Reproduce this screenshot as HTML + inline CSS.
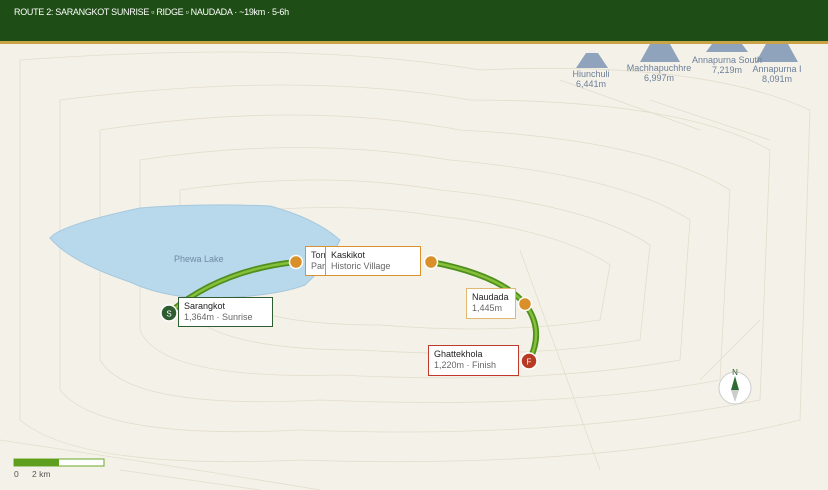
<!DOCTYPE html>
<html><head><style>
body{margin:0;width:828px;height:490px;overflow:hidden;background:#f4f1e8;font-family:"Liberation Sans",sans-serif;position:relative}
.hdr{position:absolute;left:0;top:0;width:828px;height:41px;background:#1e4d15}
.hdr span{position:absolute;left:14px;top:7px;color:#fff;font-size:9px;letter-spacing:-0.3px}
.gold{position:absolute;left:0;top:41px;width:828px;height:3px;background:#c9a447}
.box{position:absolute;background:#fff;font-size:9px;color:#333;padding:3px 5px;line-height:11px;box-sizing:border-box;white-space:nowrap;overflow:hidden}
.box b{font-weight:normal;color:#222}
.box i{font-style:normal;color:#666}
.m{position:absolute;font-size:9px;color:#6b7f99;text-align:center;line-height:10px;white-space:nowrap}
</style></head><body>
<svg width="828" height="490" style="position:absolute;left:0;top:0">
<g fill="none" stroke="#e3ddcc" stroke-width="0.8">
<path d="M20 60 Q300 40 480 70 Q700 60 810 110 L800 420 Q600 470 300 460 Q80 470 20 420Z"/>
<path d="M60 100 Q300 70 470 100 Q680 100 770 150 L760 400 Q560 440 300 430 Q100 440 60 390Z"/>
<path d="M100 130 Q300 100 460 130 Q650 140 730 190 L720 380 Q560 410 320 400 Q130 410 100 360Z"/>
<path d="M140 160 Q300 135 450 160 Q620 175 690 220 L680 360 Q540 385 340 375 Q160 380 140 330Z"/>
<path d="M180 190 Q320 170 440 190 Q590 205 650 245 L640 340 Q520 360 360 350 Q200 350 180 300Z"/>
<path d="M220 215 Q330 200 430 215 Q560 230 610 265 L600 320 Q500 335 380 325 Q240 325 220 285Z"/>
<path d="M560 80 L700 130 M650 100 L770 140 M700 380 L760 320 M520 250 L600 470"/>
<path d="M0 440 Q200 470 320 490 M120 470 L260 490"/>
</g>
<path d="M50 238 Q60 225 140 208 Q200 203 270 206 Q315 218 340 240 Q330 262 305 285 Q270 298 200 298 Q160 296 130 282 Q70 262 50 238Z" fill="#b8d8ec" stroke="#a7c8dd" stroke-width="1"/>
<path d="M169 313 Q220 270 296 262" fill="none" stroke="#4e8f1e" stroke-width="6"/>
<path d="M169 313 Q220 270 296 262" fill="none" stroke="#86bf3a" stroke-width="2.5"/>
<path d="M431 262 Q500 275 525 304 Q545 330 529 361" fill="none" stroke="#4e8f1e" stroke-width="6"/>
<path d="M431 262 Q500 275 525 304 Q545 330 529 361" fill="none" stroke="#86bf3a" stroke-width="2.5"/>
<circle cx="296" cy="262" r="6.5" fill="#d98f2a" stroke="#fff" stroke-width="1.5"/>
<circle cx="431" cy="262" r="6.5" fill="#d98f2a" stroke="#fff" stroke-width="1.5"/>
<circle cx="525" cy="304" r="6.5" fill="#d98f2a" stroke="#fff" stroke-width="1.5"/>
<circle cx="169" cy="313" r="8" fill="#2e5e30" stroke="#fff" stroke-width="1.5"/>
<text x="169" y="316.5" font-size="8" fill="#fff" text-anchor="middle" font-family="Liberation Sans">S</text>
<circle cx="529" cy="361" r="8" fill="#b83a24" stroke="#fff" stroke-width="1.5"/>
<text x="529" y="364.5" font-size="8" fill="#fff" text-anchor="middle" font-family="Liberation Sans">F</text>
<g fill="#8fa3bc"><polygon points="586,53 598,53 608,68 576,68"/><polygon points="650,44 670,44 680,62 640,62"/><polygon points="712,44 742,44 748,52 706,52"/><polygon points="766,44 788,44 798,62 756,62"/></g>
<polygon points="588,53 596,53 592,49" fill="#eee"/>
<rect x="14" y="459" width="90" height="7" fill="#fff" stroke="#6aa82a"/>
<rect x="14" y="459" width="45" height="7" fill="#5f9f1e"/>
<circle cx="735" cy="388" r="16" fill="#fff" stroke="#ccc"/>
<polygon points="735,376 739,390 731,390" fill="#2e6b33"/>
<polygon points="735,402 739,390 731,390" fill="#ccc"/>
<text x="735" y="375" font-size="8" fill="#2e5e30" text-anchor="middle" font-family="Liberation Sans">N</text>
<text x="14" y="477" font-size="8.5" fill="#555" font-family="Liberation Sans">0</text>
<text x="32" y="477" font-size="8.5" fill="#555" font-family="Liberation Sans">2 km</text>
<text x="174" y="262" font-size="9" fill="#6e8aa3" font-family="Liberation Sans">Phewa Lake</text>
</svg>
<div class="hdr"><span>ROUTE 2: SARANGKOT SUNRISE ▫ RIDGE ▫ NAUDADA · ~19km · 5-6h</span></div>
<div class="gold"></div>
<div class="m" style="left:566px;top:69px;width:50px">Hiunchuli<br>6,441m</div>
<div class="m" style="left:626px;top:63px;width:66px">Machhapuchhre<br>6,997m</div>
<div class="m" style="left:688px;top:55px;width:78px">Annapurna South<br>7,219m</div>
<div class="m" style="left:750px;top:64px;width:54px">Annapurna I<br>8,091m</div>
<div class="box" style="left:305px;top:246px;width:30px;height:30px;border:1px solid #d9922f">Torr<br><i>Para</i></div>
<div class="box" style="left:325px;top:246px;width:96px;height:30px;border:1px solid #d9922f"><b>Kaskikot</b><br><i>Historic Village</i></div>
<div class="box" style="left:178px;top:297px;width:95px;height:30px;border:1px solid #2e5e30"><b>Sarangkot</b><br><i>1,364m · Sunrise</i></div>
<div class="box" style="left:466px;top:288px;width:50px;height:31px;border:1px solid #e0b870"><b>Naudada</b><br><i>1,445m</i></div>
<div class="box" style="left:428px;top:345px;width:91px;height:31px;border:1px solid #c0392b"><b>Ghattekhola</b><br><i>1,220m · Finish</i></div>
</body></html>
